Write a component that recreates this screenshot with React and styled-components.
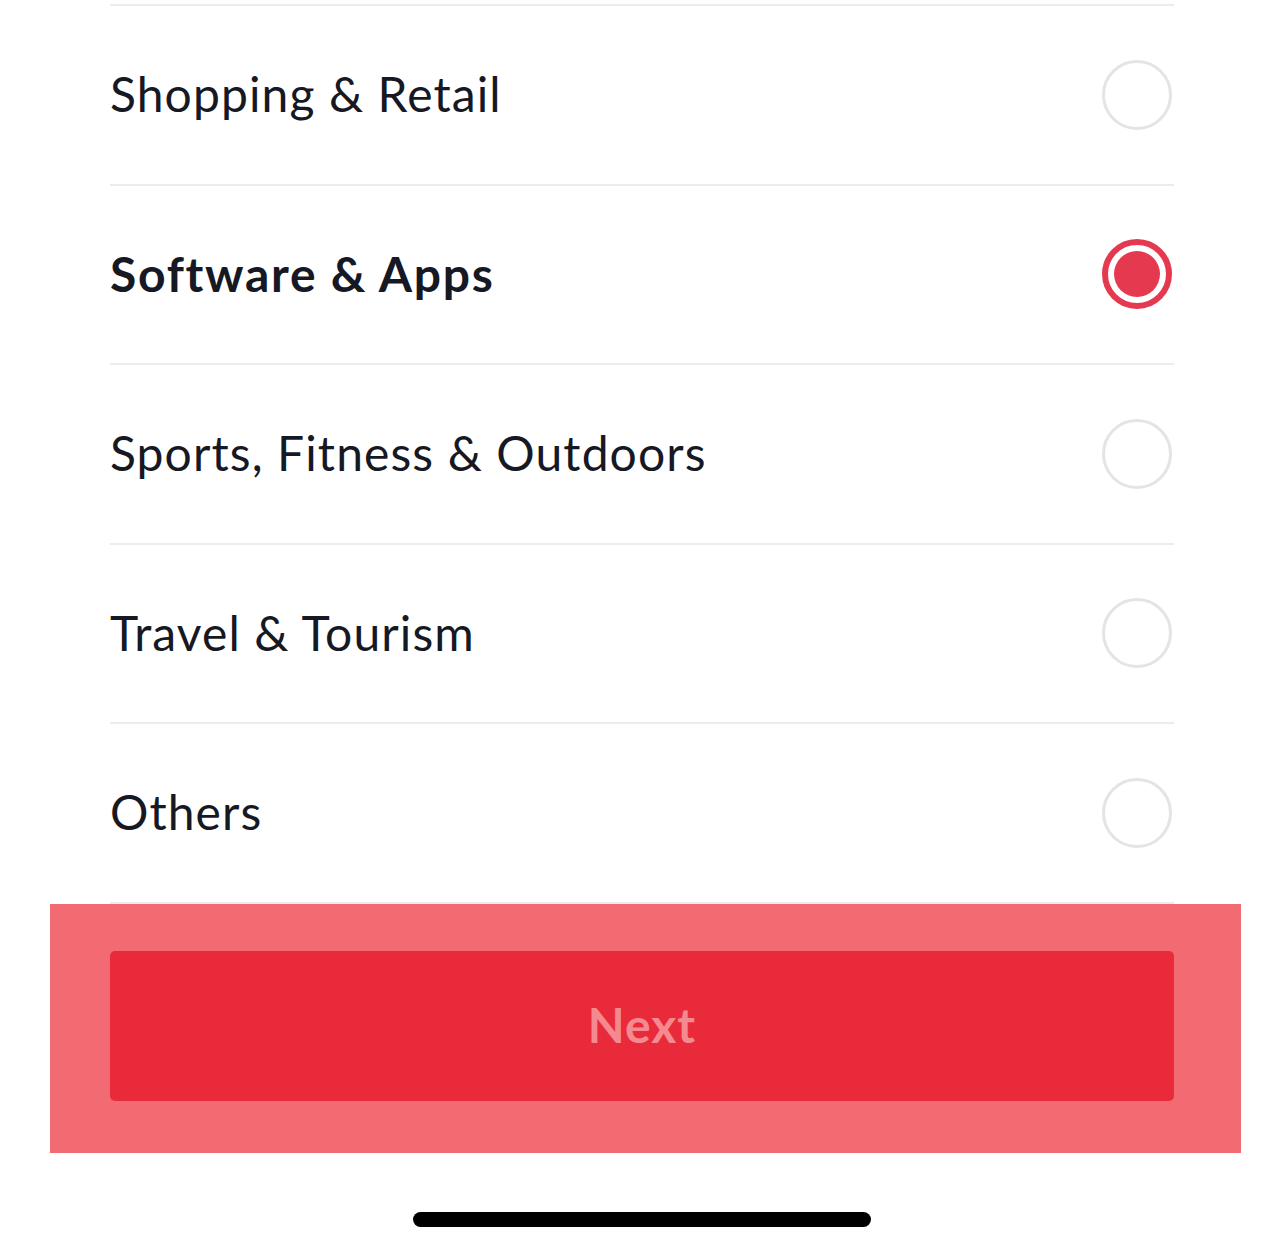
import React from "react";
import styled, { createGlobalStyle } from "styled-components";

const Global = createGlobalStyle`
  html, body { margin: 0; padding: 0; background: #ffffff; }
  body { font-family: Lato, "Noto Sans", sans-serif; color: #161823; }
  * { box-sizing: border-box; }
`;

const Page = styled.div`
  width: 1284px;
  height: 1252px;
  background: #ffffff;
  padding-top: 4px;
  display: flex;
  flex-direction: column;
  overflow: hidden;
`;

const List = styled.div`
  margin: 0 110px;
  border-bottom: 2px solid #ececec;
`;

const Row = styled.div`
  height: 179.5px;
  border-top: 2px solid #ececec;
  display: flex;
  align-items: center;
  justify-content: space-between;
`;

const Label = styled.span`
  font-size: 48px;
  font-weight: ${(p) => (p.$selected ? 700 : 400)};
  color: #161823;
  letter-spacing: ${(p) => (p.$selected ? "1.7px" : "1.1px")};
  margin-top: -2px;
`;

const Radio = styled.span`
  width: 70px;
  height: 70px;
  margin-right: 2px;
  border-radius: 50%;
  border: ${(p) => (p.$selected ? "6px solid #e5394f" : "3px solid #e4e4e4")};
  display: flex;
  align-items: center;
  justify-content: center;
`;

const Dot = styled.span`
  width: 46px;
  height: 46px;
  border-radius: 50%;
  background: #e5394f;
`;

const Footer = styled.div`
  margin: 0.5px 0 0 50px;
  width: 1191px;
  height: 249px;
  background: #f26b72;
  padding: 47px 67px 0 60px;
`;

const NextButton = styled.button`
  width: 1064px;
  height: 150px;
  border: none;
  border-radius: 5px;
  background: #e92a3a;
  color: #f48a8f;
  font-family: Lato, "Noto Sans", sans-serif;
  font-size: 48px;
  font-weight: 700;
  letter-spacing: 1px;
  display: flex;
  align-items: center;
  justify-content: center;
  padding: 0 0 4px 0;
`;

const HomeBar = styled.div`
  align-self: center;
  margin-top: 59px;
  width: 458px;
  height: 15px;
  border-radius: 8px;
  background: #000000;
`;

const items = [
  { label: "Shopping & Retail" },
  { label: "Software & Apps", selected: true },
  { label: "Sports, Fitness & Outdoors" },
  { label: "Travel & Tourism" },
  { label: "Others" },
];

export default function App() {
  return (
    <>
      <Global />
      <Page>
        <List>
          {items.map((it) => (
            <Row key={it.label}>
              <Label $selected={it.selected}>{it.label}</Label>
              <Radio $selected={it.selected}>{it.selected && <Dot />}</Radio>
            </Row>
          ))}
        </List>
        <Footer>
          <NextButton>Next</NextButton>
        </Footer>
        <HomeBar />
      </Page>
    </>
  );
}
